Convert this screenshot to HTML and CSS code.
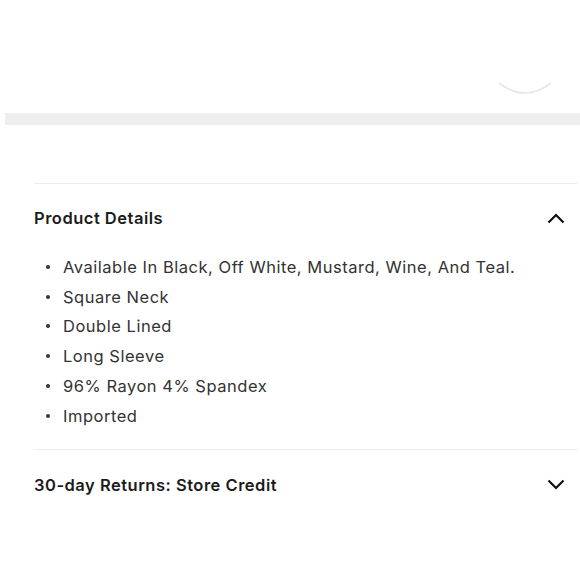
FILE: index.html
```html
<!DOCTYPE html>
<html>
<head>
<meta charset="utf-8">
<link rel="stylesheet" href="styles.css">
</head>
<body>
<div class="top">
  <svg class="arc" width="56" height="14" viewBox="0 0 56 14"><path d="M2 2 Q28 22 54 2" fill="none" stroke="#e6e6e6" stroke-width="1.6"/></svg>
</div>
<div class="band"></div>
<section class="details">
  <div class="acc">
    <div class="acc-head">
      <span class="acc-title">Product Details</span>
      <svg class="chev" width="18" height="11" viewBox="0 0 18 11"><polyline points="1.5,9.5 9,2 16.5,9.5" fill="none" stroke="#111" stroke-width="2.2"/></svg>
    </div>
    <ul class="list">
      <li>Available In Black, Off White, Mustard, Wine, And Teal.</li>
      <li>Square Neck</li>
      <li>Double Lined</li>
      <li>Long Sleeve</li>
      <li>96% Rayon 4% Spandex</li>
      <li>Imported</li>
    </ul>
  </div>
  <div class="acc">
    <div class="acc-head tall">
      <span class="acc-title">30-day Returns: Store Credit</span>
      <svg class="chev" width="18" height="11" viewBox="0 0 18 11"><polyline points="1.5,1.5 9,9 16.5,1.5" fill="none" stroke="#111" stroke-width="2.2"/></svg>
    </div>
  </div>
</section>
</body>
</html>
```
FILE: styles.css
```css
html, body { margin: 0; padding: 0; background: #fff; }
body { font-family: Inter, Lato, "Liberation Sans", sans-serif; color: #333; }
.top {
  height: 113px;
  display: flex;
  justify-content: flex-end;
  align-items: flex-end;
  padding: 0 27px 18px 0;
  box-sizing: border-box;
}
.arc { display: block; }
.band { margin-left: 5px; height: 12px; background: #eeeeee; }
.details { margin-top: 58px; padding: 0 3px 0 34px; }
.acc { border-top: 1px solid #ececec; }
.acc-head {
  height: 68px;
  display: flex;
  align-items: center;
  justify-content: space-between;
  padding-right: 12px;
}
.acc-head.tall { height: 70px; }
.acc-title { font-size: 16.5px; font-weight: 600; color: #1c1c1c; letter-spacing: 0.5px; }
.chev { display: block; }
.list { list-style: none; margin: 0; padding: 0 0 18px 0; }
.list li {
  display: flex;
  align-items: center;
  height: 29.8px;
  font-size: 16.5px;
  color: #333;
  letter-spacing: 0.52px;
}
.list li::before {
  content: "";
  width: 4px;
  height: 4px;
  border-radius: 50%;
  background: #333;
  margin: 0 13px 0 12px;
  flex: none;
}
```
